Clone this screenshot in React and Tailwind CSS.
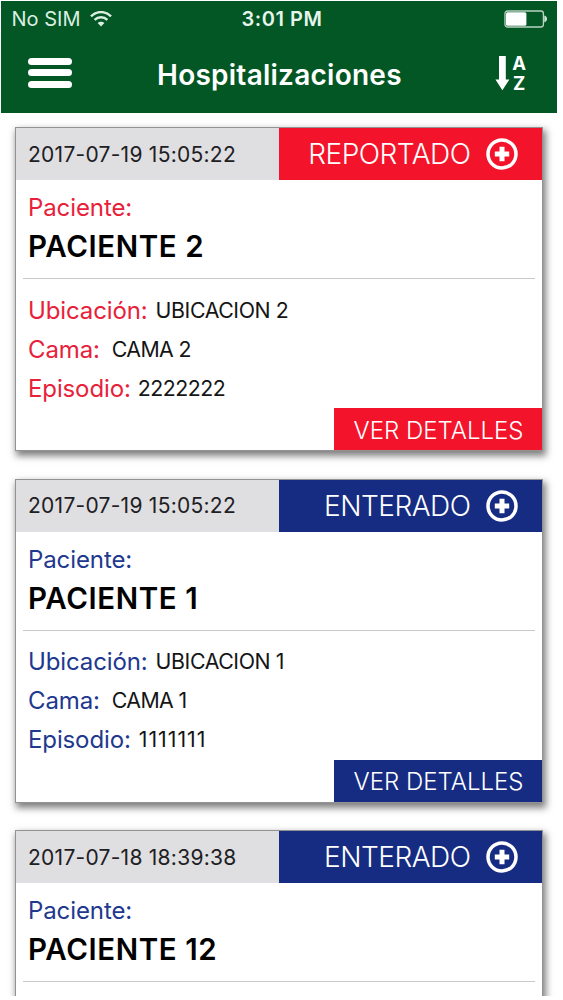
import React from "react";
import clsx from "clsx";

const patients = [
  { id: 1, date: "2017-07-19 15:05:22", status: "REPORTADO", name: "PACIENTE 2", location: "UBICACION 2", bed: "CAMA 2", episode: "2222222", episodeClass: "ml-[7px] tracking-[-0.5px]" },
  { id: 2, date: "2017-07-19 15:05:22", status: "ENTERADO", name: "PACIENTE 1", location: "UBICACION 1", bed: "CAMA 1", episode: "1111111", episodeClass: "ml-[8px] tracking-[1px]" },
  { id: 3, date: "2017-07-18 18:39:38", status: "ENTERADO", name: "PACIENTE 12" },
];

const WifiIcon = () => (
  <svg width="22" height="16" viewBox="0 0 22 16" fill="none" stroke="currentColor" strokeWidth="2.5">
    <path d="M1 5.3C6.6 -0.3 15.4 -0.3 21 5.3" />
    <path d="M4.6 8.9C8.2 5.4 13.8 5.4 17.4 8.9" />
    <path d="M11 15.6L7.6 12.1C9.5 10.3 12.5 10.3 14.4 12.1Z" fill="currentColor" stroke="none" />
  </svg>
);

const BatteryIcon = () => (
  <svg width="44" height="18" viewBox="0 0 44 18" fill="none">
    <rect x="1" y="1" width="38.4" height="16" rx="2.5" stroke="#b9d4c2" strokeWidth="1.3" />
    <rect x="2" y="2.2" width="20.4" height="13.6" rx="1.5" fill="#fff" />
    <path d="M40.3 5.6C43.9 6.6 43.9 11.4 40.3 12.4Z" fill="#d5e6da" />
  </svg>
);

const SortIcon = () => (
  <div className="flex h-[40px] items-center gap-[2px] text-white">
    <svg width="15" height="36" viewBox="0 0 15 36" fill="currentColor">
      <path d="M4 1H10.8V24.5H14.4L7.4 35.2L0.4 24.5H4Z" />
    </svg>
    <div className="flex flex-col items-center text-[18.5px] leading-[20px] font-bold">
      <span>A</span>
      <span>Z</span>
    </div>
  </div>
);

const PlusCircle = () => (
  <svg width="32" height="32" viewBox="0 0 32 32" fill="none" stroke="#fff">
    <circle cx="16" cy="16" r="14" strokeWidth="3.5" />
    <path d="M16 8.8V23.2M8.8 16H23.2" strokeWidth="5" />
  </svg>
);

const Row = ({ label, value, red, valueClass }) => (
  <div className="flex h-[39px] items-center whitespace-nowrap">
    <span className={clsx("text-[24px] tracking-[-0.12px]", red ? "text-[#e8213b]" : "text-[#21388f]")}>{label}</span>
    <span className={clsx("text-[21.3px] text-[#151515]", valueClass)}>{value}</span>
  </div>
);

const PatientCard = ({ patient }) => {
  const red = patient.status === "REPORTADO";
  const fill = red ? "bg-[#f3142b]" : "bg-[#162c83]";

  return (
    <div className="h-[324px] w-[528px] shrink-0 border border-[#929292] bg-white shadow-[2px_4px_7px_1px_rgba(0,0,0,0.5)]">
      <div className="flex h-[52px]">
        <div className="flex w-[263px] items-center bg-[#dfdee0] pt-px pl-[12px] text-[21px] tracking-[0.26px] whitespace-nowrap text-[#202024]">
          {patient.date}
        </div>
        <div className={clsx("flex flex-1 items-center justify-end pr-[24.5px] text-white", fill)}>
          <span className="mr-[15px] text-[28px] font-light tracking-[-0.5px]">{patient.status}</span>
          <PlusCircle />
        </div>
      </div>

      <div className="mx-[7px] border-b border-[#c9c9c9] pt-[8px] pb-[13px] pl-[5px]">
        <div className={clsx("h-[39px] text-[24px] leading-[39px] tracking-[-0.1px]", red ? "text-[#e8213b]" : "text-[#21388f]")}>
          Paciente:
        </div>
        <div className="h-[38px] text-[29.5px] leading-[39px] font-semibold tracking-[0.6px] text-black">{patient.name}</div>
      </div>

      {patient.location && (
        <>
          <div className="pt-[12px] pl-[12px]">
            <Row label="Ubicación:" value={patient.location} red={red} valueClass="ml-[8px] tracking-[-0.4px]" />
            <Row label="Cama:" value={patient.bed} red={red} valueClass="ml-[12px] tracking-[-0.6px]" />
            <Row label="Episodio:" value={patient.episode} red={red} valueClass={patient.episodeClass} />
          </div>

          <button className={clsx("ml-auto flex h-[42px] w-[208px] items-center justify-center pt-[3px] pl-px text-[24px] font-light whitespace-nowrap text-white", fill)}>
            VER DETALLES
          </button>
        </>
      )}
    </div>
  );
};

const App = () => {
  return (
    <div className="h-[1000px] w-[563px] overflow-hidden bg-white font-['Inter',sans-serif]">
      <div className="flex h-[996px] flex-col overflow-hidden">
        <header className="mt-px ml-px h-[112px] w-[556px] shrink-0 bg-[#025725] text-white">
          <div className="flex h-[35px] items-center justify-between pr-[9px] pl-[10.5px]">
            <div className="flex w-[230px] items-center gap-[10px] text-[20px] text-[#dcefe2]">
              <span>No SIM</span>
              <WifiIcon />
            </div>
            <div className="flex-1 text-[20px] font-semibold tracking-[0.55px] text-[#e6f5ea]">3:01 PM</div>
            <BatteryIcon />
          </div>
          <div className="flex h-[73px] items-center pr-[31px] pl-[27px]">
            <div className="flex w-[44px] flex-col gap-[4.5px]">
              <span className="h-[7px] rounded-full bg-white" />
              <span className="h-[7px] rounded-full bg-white" />
              <span className="h-[7px] rounded-full bg-white" />
            </div>
            <h1 className="mr-auto ml-[85px] pt-[4px] text-[28px] font-semibold tracking-[0.25px]">Hospitalizaciones</h1>
            <SortIcon />
          </div>
        </header>

        <main className="flex flex-col gap-[27.5px] pt-[14px] pl-[15px]">
          {patients.map((patient) => (
            <PatientCard key={patient.id} patient={patient} />
          ))}
        </main>
      </div>
    </div>
  );
};

export default App;
